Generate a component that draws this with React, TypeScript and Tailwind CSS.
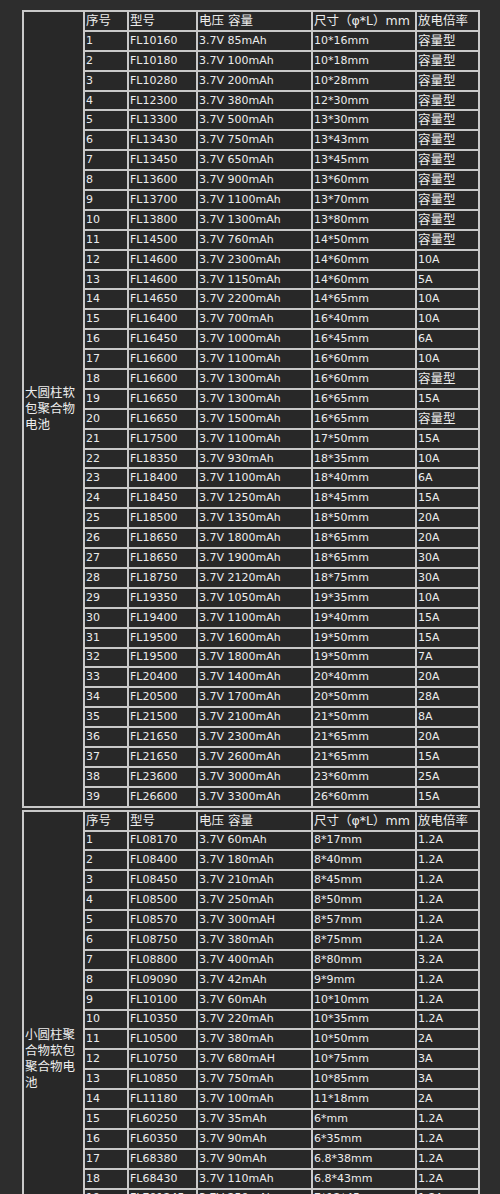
const big: string[][] = [
  ["1", "FL10160", "3.7V 85mAh", "10*16mm", "容量型"],
  ["2", "FL10180", "3.7V 100mAh", "10*18mm", "容量型"],
  ["3", "FL10280", "3.7V 200mAh", "10*28mm", "容量型"],
  ["4", "FL12300", "3.7V 380mAh", "12*30mm", "容量型"],
  ["5", "FL13300", "3.7V 500mAh", "13*30mm", "容量型"],
  ["6", "FL13430", "3.7V 750mAh", "13*43mm", "容量型"],
  ["7", "FL13450", "3.7V 650mAh", "13*45mm", "容量型"],
  ["8", "FL13600", "3.7V 900mAh", "13*60mm", "容量型"],
  ["9", "FL13700", "3.7V 1100mAh", "13*70mm", "容量型"],
  ["10", "FL13800", "3.7V 1300mAh", "13*80mm", "容量型"],
  ["11", "FL14500", "3.7V 760mAh", "14*50mm", "容量型"],
  ["12", "FL14600", "3.7V 2300mAh", "14*60mm", "10A"],
  ["13", "FL14600", "3.7V 1150mAh", "14*60mm", "5A"],
  ["14", "FL14650", "3.7V 2200mAh", "14*65mm", "10A"],
  ["15", "FL16400", "3.7V 700mAh", "16*40mm", "10A"],
  ["16", "FL16450", "3.7V 1000mAh", "16*45mm", "6A"],
  ["17", "FL16600", "3.7V 1100mAh", "16*60mm", "10A"],
  ["18", "FL16600", "3.7V 1300mAh", "16*60mm", "容量型"],
  ["19", "FL16650", "3.7V 1300mAh", "16*65mm", "15A"],
  ["20", "FL16650", "3.7V 1500mAh", "16*65mm", "容量型"],
  ["21", "FL17500", "3.7V 1100mAh", "17*50mm", "15A"],
  ["22", "FL18350", "3.7V 930mAh", "18*35mm", "10A"],
  ["23", "FL18400", "3.7V 1100mAh", "18*40mm", "6A"],
  ["24", "FL18450", "3.7V 1250mAh", "18*45mm", "15A"],
  ["25", "FL18500", "3.7V 1350mAh", "18*50mm", "20A"],
  ["26", "FL18650", "3.7V 1800mAh", "18*65mm", "20A"],
  ["27", "FL18650", "3.7V 1900mAh", "18*65mm", "30A"],
  ["28", "FL18750", "3.7V 2120mAh", "18*75mm", "30A"],
  ["29", "FL19350", "3.7V 1050mAh", "19*35mm", "10A"],
  ["30", "FL19400", "3.7V 1100mAh", "19*40mm", "15A"],
  ["31", "FL19500", "3.7V 1600mAh", "19*50mm", "15A"],
  ["32", "FL19500", "3.7V 1800mAh", "19*50mm", "7A"],
  ["33", "FL20400", "3.7V 1400mAh", "20*40mm", "20A"],
  ["34", "FL20500", "3.7V 1700mAh", "20*50mm", "28A"],
  ["35", "FL21500", "3.7V 2100mAh", "21*50mm", "8A"],
  ["36", "FL21650", "3.7V 2300mAh", "21*65mm", "20A"],
  ["37", "FL21650", "3.7V 2600mAh", "21*65mm", "15A"],
  ["38", "FL23600", "3.7V 3000mAh", "23*60mm", "25A"],
  ["39", "FL26600", "3.7V 3300mAh", "26*60mm", "15A"],
];

const small: string[][] = [
  ["1", "FL08170", "3.7V 60mAh", "8*17mm", "1.2A"],
  ["2", "FL08400", "3.7V 180mAh", "8*40mm", "1.2A"],
  ["3", "FL08450", "3.7V 210mAh", "8*45mm", "1.2A"],
  ["4", "FL08500", "3.7V 250mAh", "8*50mm", "1.2A"],
  ["5", "FL08570", "3.7V 300mAH", "8*57mm", "1.2A"],
  ["6", "FL08750", "3.7V 380mAh", "8*75mm", "1.2A"],
  ["7", "FL08800", "3.7V 400mAh", "8*80mm", "3.2A"],
  ["8", "FL09090", "3.7V 42mAh", "9*9mm", "1.2A"],
  ["9", "FL10100", "3.7V 60mAh", "10*10mm", "1.2A"],
  ["10", "FL10350", "3.7V 220mAh", "10*35mm", "1.2A"],
  ["11", "FL10500", "3.7V 380mAh", "10*50mm", "2A"],
  ["12", "FL10750", "3.7V 680mAH", "10*75mm", "3A"],
  ["13", "FL10850", "3.7V 750mAh", "10*85mm", "3A"],
  ["14", "FL11180", "3.7V 100mAh", "11*18mm", "2A"],
  ["15", "FL60250", "3.7V 35mAh", "6*mm", "1.2A"],
  ["16", "FL60350", "3.7V 90mAh", "6*35mm", "1.2A"],
  ["17", "FL68380", "3.7V 90mAh", "6.8*38mm", "1.2A"],
  ["18", "FL68430", "3.7V 110mAh", "6.8*43mm", "1.2A"],
  ["19", "FL701245", "3.7V 250mAh", "7*12*45mm", "1.2A"],
  ["20", "FL751540", "3.7V 280mAh", "7.5*15*40mm", "1.2A"],
  ["21", "FL801650", "3.7V 400mAh", "8*16*50mm", "1.2A"],
  ["22", "FL902040", "3.7V 450mAh", "9*20*40mm", "1.2A"],
  ["23", "FL102050", "3.7V 600mAh", "10*20*50mm", "1.2A"],
  ["24", "FL122560", "3.7V 900mAh", "12*25*60mm", "1.2A"],
];

const header = ["序号", "型号", "电压 容量", "尺寸（φ*L）mm", "放电倍率"];
const hasCjk = (s: string) => /[\u3000-\u9fff\uff00-\uffef]/.test(s);

const cell = "border-2 border-[#c9c9c9] bg-[#282828] px-[1px] py-0 text-left align-middle whitespace-nowrap";

function SpecTable({ label, rows }: { label: string; rows: string[][] }) {
  return (
    <table className="w-[456px] table-fixed border-collapse border-2 border-[#c9c9c9]">
      <colgroup>
        <col className="w-[61px]" />
        <col className="w-[44px]" />
        <col className="w-[69px]" />
        <col className="w-[115px]" />
        <col className="w-[104px]" />
        <col className="w-[63px]" />
      </colgroup>
      <tbody>
        <tr className="h-[19.9px]">
          <td
            rowSpan={rows.length + 1}
            className="border-2 border-[#c9c9c9] bg-[#282828] px-[1px] align-middle text-[12.5px] leading-[16px] break-all"
          >
            {label}
          </td>
          {header.map((h) => (
            <td key={h} className={`${cell} text-[12.5px]`}>
              {h}
            </td>
          ))}
        </tr>
        {rows.map((r, i) => (
          <tr key={i} className="h-[19.9px]">
            {r.map((v, j) => (
              <td key={j} className={`${cell} ${hasCjk(v) ? "text-[12.5px]" : "text-[11px]"}`}>
                {v}
              </td>
            ))}
          </tr>
        ))}
      </tbody>
    </table>
  );
}

export default function App() {
  return (
    <div
      className="min-h-screen bg-[#2d2d2d] pl-[22px] pt-[10px] text-[#ececec] leading-[16px]"
      style={{ fontFamily: '"DejaVu Sans", "Noto Sans CJK SC", sans-serif' }}
    >
      <div className="flex flex-col gap-[2px]">
        <SpecTable label="大圆柱软包聚合物电池" rows={big} />
        <SpecTable label="小圆柱聚合物软包聚合物电池" rows={small} />
      </div>
    </div>
  );
}
